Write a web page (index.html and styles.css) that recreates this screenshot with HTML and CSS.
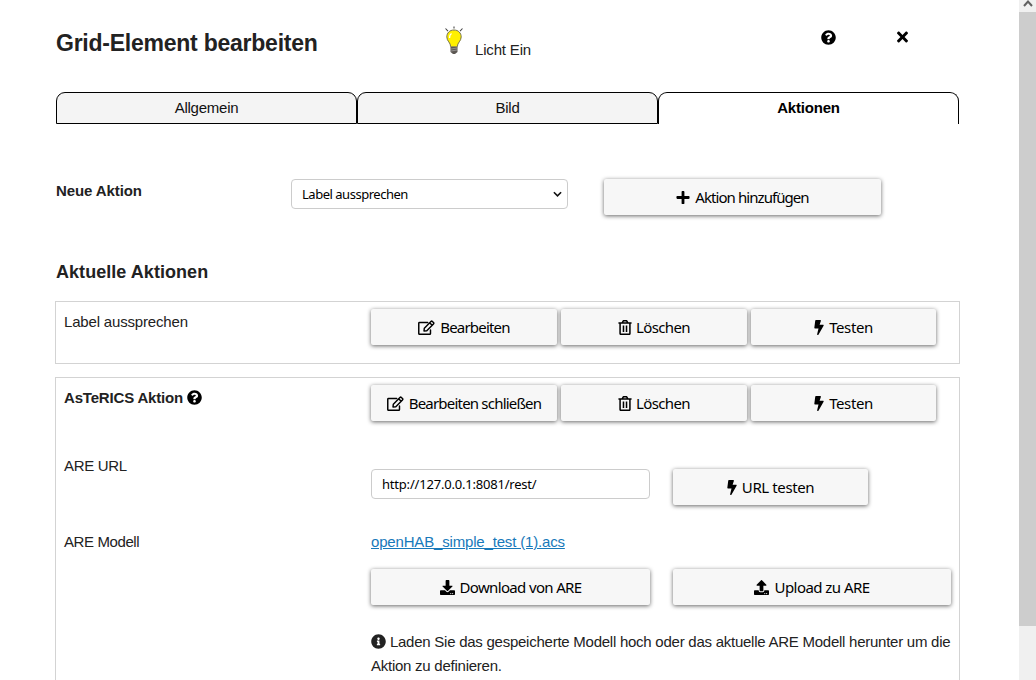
FILE: index.html
```html
<!DOCTYPE html>
<html lang="de">
<head>
<meta charset="utf-8">
<title>Grid-Element bearbeiten</title>
<link rel="stylesheet" href="styles.css">
</head>
<body>
<svg class="sprite" aria-hidden="true">
  <symbol id="help" viewBox="0 0 512 512"><path d="M504 256c0 136.997-111.043 248-248 248S8 392.997 8 256C8 119.083 119.043 8 256 8s248 111.083 248 248zM262.655 90c-54.497 0-89.255 22.957-116.549 63.758-3.536 5.286-2.353 12.415 2.715 16.258l34.699 26.31c5.205 3.947 12.621 3.008 16.665-2.122 17.864-22.658 30.113-35.797 57.303-35.797 20.429 0 45.698 13.148 45.698 32.958 0 14.976-12.363 22.667-32.534 33.976C247.128 238.528 216 254.941 216 296v4c0 6.627 5.373 12 12 12h56c6.627 0 12-5.373 12-12v-1.333c0-28.462 83.186-29.647 83.186-106.667 0-58.002-60.165-102-116.531-102zM256 338c-25.365 0-46 20.635-46 46 0 25.364 20.635 46 46 46s46-20.636 46-46c0-25.365-20.635-46-46-46z"/></symbol>
  <symbol id="info" viewBox="0 0 512 512"><path d="M256 8C119.043 8 8 119.083 8 256c0 136.997 111.043 248 248 248s248-111.003 248-248C504 119.083 392.957 8 256 8zm0 110c23.196 0 42 18.804 42 42s-18.804 42-42 42-42-18.804-42-42 18.804-42 42-42zm56 254c0 6.627-5.373 12-12 12h-88c-6.627 0-12-5.373-12-12v-24c0-6.627 5.373-12 12-12h12v-64h-12c-6.627 0-12-5.373-12-12v-24c0-6.627 5.373-12 12-12h64c6.627 0 12 5.373 12 12v100h12c6.627 0 12 5.373 12 12v24z"/></symbol>
  <symbol id="bolt" viewBox="0 0 320 512"><path d="M296 160H180.6l42.6-129.8C227.2 15 215.7 0 200 0H56C44 0 33.8 8.9 32.2 20.8l-32 240C-1.7 275.2 9.5 288 24 288h118.7L96.6 482.5c-3.6 15.2 8 29.5 23.3 29.5 8.4 0 16.4-4.4 20.8-12l176-304c9.3-15.9-2.2-36-20.7-36z"/></symbol>
  <symbol id="plus" viewBox="0 0 448 512"><path d="M416 208H272V64c0-17.67-14.33-32-32-32h-32c-17.67 0-32 14.33-32 32v144H32c-17.67 0-32 14.33-32 32v32c0 17.67 14.33 32 32 32h144v144c0 17.67 14.33 32 32 32h32c17.67 0 32-14.33 32-32V304h144c17.67 0 32-14.33 32-32v-32c0-17.67-14.33-32-32-32z"/></symbol>
  <symbol id="times" viewBox="0 0 352 512"><path d="M242.72 256l100.07-100.07c12.28-12.28 12.28-32.19 0-44.48l-22.24-22.24c-12.28-12.28-32.19-12.28-44.48 0L176 189.28 75.93 89.21c-12.28-12.28-32.19-12.28-44.48 0L9.21 111.45c-12.28 12.28-12.28 32.19 0 44.48L109.28 256 9.21 356.07c-12.28 12.28-12.28 32.19 0 44.48l22.24 22.24c12.28 12.28 32.2 12.28 44.48 0L176 322.72l100.07 100.07c12.28 12.28 32.2 12.28 44.48 0l22.24-22.24c12.28-12.28 12.28-32.19 0-44.48L242.72 256z"/></symbol>
  <symbol id="download" viewBox="0 0 512 512"><path d="M216 0h80c13.3 0 24 10.7 24 24v168h87.7c17.8 0 26.7 21.5 14.1 34.1L269.7 378.3c-7.5 7.5-19.8 7.5-27.3 0L90.1 226.1c-12.6-12.6-3.7-34.1 14.1-34.1H192V24c0-13.3 10.7-24 24-24zm296 376v112c0 13.3-10.7 24-24 24H24c-13.3 0-24-10.7-24-24V376c0-13.3 10.7-24 24-24h146.7l49 49c20.1 20.1 52.5 20.1 72.6 0l49-49H488c13.3 0 24 10.7 24 24zm-124 88c0-11-9-20-20-20s-20 9-20 20 9 20 20 20 20-9 20-20zm64 0c0-11-9-20-20-20s-20 9-20 20 9 20 20 20 20-9 20-20z"/></symbol>
  <symbol id="upload" viewBox="0 0 512 512"><path d="M296 384h-80c-13.3 0-24-10.7-24-24V192h-87.7c-17.8 0-26.7-21.5-14.1-34.1L242.3 5.7c7.5-7.5 19.8-7.5 27.3 0l152.2 152.2c12.6 12.6 3.7 34.1-14.1 34.1H320v168c0 13.3-10.7 24-24 24zm216-8v112c0 13.3-10.7 24-24 24H24c-13.3 0-24-10.7-24-24V376c0-13.3 10.7-24 24-24h136v8c0 30.9 25.1 56 56 56h80c30.9 0 56-25.1 56-56v-8h136c13.3 0 24 10.7 24 24zm-124 88c0-11-9-20-20-20s-20 9-20 20 9 20 20 20 20-9 20-20zm64 0c0-11-9-20-20-20s-20 9-20 20 9 20 20 20 20-9 20-20z"/></symbol>
  <symbol id="edit" viewBox="0 0 576 512"><g fill="none" stroke="currentColor" stroke-width="50" stroke-linejoin="round" stroke-linecap="round"><path d="M330 88H48q-24 0-24 24v352q0 24 24 24h352q24 0 24-24V340"/><path d="M440 50q24-24 48 0l38 38q24 24 0 48L298 364l-95 11 11-95zM395 95l86 86"/></g></symbol>
  <symbol id="trash" viewBox="0 0 448 512"><g fill="none" stroke="currentColor" stroke-width="52" stroke-linejoin="round"><path d="M0 104h448M56 104v360q0 24 24 24h288q24 0 24-24V104M128 96l38-70h116l38 70M172 190v218M276 190v218"/></g></symbol>
</svg>

<div class="window">
  <main class="page">
    <header class="header">
      <h1 class="title">Grid-Element bearbeiten</h1>
      <div class="element">
        <svg class="bulb" viewBox="0 0 20 30">
          <path d="M10 .5v2M1.500 2.500l2.500 2.700M18.500 2.500l-2.500 2.700" stroke="#444" stroke-width="1.100" fill="none"/>
          <path d="M10 4c-4.300 0-7.200 3-7.200 6.900 0 4.300 3.900 5.600 3.900 9.900h6.600c0-4.300 3.900-5.600 3.900-9.900C17.200 7 14.300 4 10 4z" fill="#fff000" stroke="#77734d" stroke-width="1"/>
          <path d="M7.500 7.500Q5.300 9 5.500 12" stroke="#fff" stroke-width="1.400" fill="none"/>
          <path d="M6.500 21h7v5L11 28H9l-2.500-2z" fill="#5c5753"/>
          <path d="M7 23l6-1M7 25l6-1" stroke="#aaa" stroke-width=".7"/>
        </svg>
        <span>Licht Ein</span>
      </div>
      <svg class="icon head-help"><use href="#help"/></svg>
      <svg class="icon head-close"><use href="#times"/></svg>
    </header>

    <nav class="tabs">
      <button class="tab">Allgemein</button>
      <button class="tab">Bild</button>
      <button class="tab active">Aktionen</button>
    </nav>

    <section class="new-action">
      <label class="new-label">Neue Aktion</label>
      <div class="field select"><span>Label aussprechen</span>
        <svg class="chevron" viewBox="0 0 10 6"><path d="M1 1l4 4 4-4"/></svg>
      </div>
      <button class="btn add"><svg class="icon w14"><use href="#plus"/></svg><span>Aktion hinzufügen</span></button>
    </section>

    <h2 class="subtitle">Aktuelle Aktionen</h2>

    <section class="card card-small">
      <div class="row">
        <span class="name">Label aussprechen</span>
        <div class="buttons">
          <button class="btn edit"><svg class="icon w18"><use href="#edit"/></svg><span>Bearbeiten</span></button>
          <button class="btn delete"><svg class="icon w14"><use href="#trash"/></svg><span>Löschen</span></button>
          <button class="btn test"><svg class="icon w10"><use href="#bolt"/></svg><span>Testen</span></button>
        </div>
      </div>
    </section>

    <section class="card card-large">
      <div class="row">
        <span class="name strong">AsTeRICS Aktion <svg class="icon inline"><use href="#help"/></svg></span>
        <div class="buttons">
          <button class="btn edit"><svg class="icon w18"><use href="#edit"/></svg><span>Bearbeiten schließen</span></button>
          <button class="btn delete"><svg class="icon w14"><use href="#trash"/></svg><span>Löschen</span></button>
          <button class="btn test"><svg class="icon w10"><use href="#bolt"/></svg><span>Testen</span></button>
        </div>
      </div>
      <div class="row url-row">
        <span class="name">ARE URL</span>
        <div class="pair">
          <div class="field">http://127.0.0.1:8081/rest/</div>
          <button class="btn url-test"><svg class="icon w10"><use href="#bolt"/></svg><span>URL testen</span></button>
        </div>
      </div>
      <div class="row model-row">
        <span class="name">ARE Modell</span>
        <div>
          <a class="file">openHAB_simple_test (1).acs</a>
          <div class="pair transfer">
            <button class="btn download"><svg class="icon"><use href="#download"/></svg><span>Download von ARE</span></button>
            <button class="btn upload"><svg class="icon"><use href="#upload"/></svg><span>Upload zu ARE</span></button>
          </div>
          <p class="hint"><svg class="icon inline info"><use href="#info"/></svg> Laden Sie das gespeicherte Modell hoch oder das aktuelle ARE Modell herunter um die<br>Aktion zu definieren.</p>
        </div>
      </div>
    </section>
  </main>
  <aside class="scrollbar">
    <div class="scroll-up"><svg viewBox="0 0 10 7"><path d="M1 6l4-4.500 4 4.500"/></svg></div>
    <div class="thumb"></div>
  </aside>
</div>
</body>
</html>
```

FILE: styles.css
```css
* { box-sizing: border-box; }
body {
  margin: 0;
  overflow: hidden;
  background: #fff;
  color: #222;
  font: 15px/24px "Liberation Sans", Arial, sans-serif;
  letter-spacing: -.17px;
}
.sprite { display: none; }
.window { display: flex; height: 680px; overflow: hidden; }
.page { width: 1019px; padding: 0 59px 0 55px; }

.icon { width: 15px; height: 15px; fill: currentColor; color: #000; flex: none; }
.icon.w18 { width: 17px; }
.icon.w14 { width: 14px; }
.icon.w10 { width: 10px; }
.icon.inline { vertical-align: -2px; }
.icon.info { color: #222; }

.header {
  display: grid;
  grid-template-columns: 388px 376px 77px 1fr;
  height: 92px;
  padding-left: 1px;
}
.title { margin: 28px 0 0; font-size: 23px; line-height: 30px; font-weight: 700; letter-spacing: -.24px; }
.element { display: flex; gap: 11px; padding-top: 26px; }
.element span { padding-top: 12px; }
.bulb { width: 20px; height: 30px; }
.head-help { margin-top: 30px; margin-left: 1px; }
.head-close { width: 11px; height: 16px; margin-top: 29px; }

.tabs { display: flex; padding: 0 0 0 1px; margin-right: 1px; height: 32px; }
.tab {
  width: 301px;
  height: 32px;
  padding: 0;
  border: 1px solid #000;
  border-radius: 9px 9px 0 0;
  background: #f4f4f4;
  color: #111;
  font: 15px/24px "Liberation Sans", Arial, sans-serif;
  letter-spacing: -.25px;
}
.tab.active { background: #fff; border-bottom: 0; padding-bottom: 2px; font-weight: 700; letter-spacing: -.2px; color: #000; }

.new-action { display: flex; margin-top: 55px; padding-left: 1px; height: 37px; }
.new-label { width: 235px; font-weight: 700; letter-spacing: -.1px; }
.field {
  display: flex;
  align-items: center;
  justify-content: space-between;
  width: 279px;
  height: 30px;
  padding: 0 10px;
  border: 1px solid #ccc;
  border-radius: 4px;
  background: #fff;
  color: #000;
  font: 13px/16px "Noto Sans", sans-serif;
  letter-spacing: -.2px;
}
.field.select { width: 277px; padding-right: 5px; letter-spacing: -.48px; }
.chevron { width: 9px; height: 6px; }
.chevron path { fill: none; stroke: #111; stroke-width: 1.8; }

.btn {
  display: flex;
  align-items: center;
  justify-content: center;
  gap: 5px;
  height: 36px;
  padding: 0;
  border: 0;
  border-radius: 2px;
  background: #f7f7f7;
  color: #000;
  font: 15px/20px "Noto Sans", sans-serif;
  letter-spacing: -.4px;
  white-space: nowrap;
  box-shadow: 0 1px 4px rgba(0, 0, 0, .6);
}
.btn.edit { letter-spacing: -.8px; }
.btn.delete { gap: 4px; letter-spacing: -.65px; }
.btn.download { letter-spacing: -.65px; }
.btn.upload { letter-spacing: -.55px; }
.btn.test { width: 185px; }
.btn.add { width: 277px; margin-left: 36px; letter-spacing: -.93px; }

.subtitle { margin: 44px 0 17px 1px; font-size: 18px; line-height: 24px; letter-spacing: .05px; }

.card { width: 905px; border: 1px solid #d3d3d3; padding: 7px 7px 0 8px; }
.card-small { height: 63px; }
.card-large { height: 330px; margin-top: 13px; }
.row { display: grid; grid-template-columns: 307px 1fr; }
.name { padding-top: 1px; }
.strong { font-weight: 700; letter-spacing: -.18px; }
.buttons { display: grid; grid-template-columns: repeat(3, 186px); gap: 4px; }
.pair { display: grid; grid-template-columns: 279px 278px; column-gap: 23px; }
.url-row { margin-top: 48px; height: 76px; }
.url-row .name { padding-top: 0; margin-top: -15px; letter-spacing: -.3px; }
.url-test { width: 195px; }
.model-row { margin-top: -15px; }
.model-row .name { padding-top: 0; letter-spacing: -.4px; }
.file { display: block; width: max-content; color: #1779ba; text-decoration: underline; }
.transfer { margin-top: 15px; }
.hint { margin: 25px 0 0; white-space: nowrap; letter-spacing: -.25px; }

.scrollbar { width: 17px; background: #f0f0f0; }
.scroll-up { height: 12px; display: flex; justify-content: center; }
.scroll-up svg { width: 10px; height: 7px; }
.scroll-up path { fill: none; stroke: #606060; stroke-width: 2; }
.thumb { height: 614px; background: #cdcdcd; }
```
